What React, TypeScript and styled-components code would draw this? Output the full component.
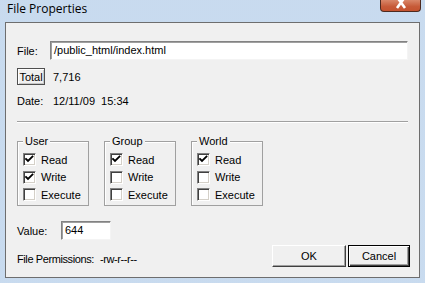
import React from 'react';
import styled, { createGlobalStyle } from 'styled-components';

const Global = createGlobalStyle`
  html, body { margin: 0; padding: 0; }
  body { width: 425px; height: 283px; overflow: hidden; background: #bfd4ea; }
`;

const Window = styled.div`
  width: 425px;
  height: 283px;
  box-sizing: border-box;
  background-color: #bcd3ea;
  background-image: radial-gradient(#d6e4f3 0.6px, transparent 0.8px);
  background-size: 2px 2px;
  display: flex;
  flex-direction: column;
  padding: 0 5px 5px 5px;
  font-family: "Liberation Sans", Arial, sans-serif;
  font-size: 11px;
  color: #000;
`;

const TitleBar = styled.div`
  height: 22px;
  display: flex;
  align-items: flex-start;
  justify-content: space-between;
`;

const Title = styled.div`
  font-family: "Open Sans", "Noto Sans", sans-serif;
  font-size: 12px;
  line-height: 16px;
  padding: 1px 0 0 2px;
  color: #000;
`;

const CloseButton = styled.div`
  width: 41px;
  height: 12px;
  box-sizing: border-box;
  background: linear-gradient(#d98769, #c65a38 60%, #c4532f);
  border: 1px solid #4d2a1f;
  border-top: none;
  border-radius: 0 0 4px 4px;
  display: flex;
  justify-content: center;
  align-items: flex-start;
  overflow: hidden;
  margin-right: -1px;
`;

const Panel = styled.div`
  flex: 1;
  background: #f0f0f0;
  border: 1px solid #6e6e6e;
  padding: 18px 11px 0 11px;
  display: flex;
  flex-direction: column;
`;

const Row = styled.div<{ $mt?: number; $h?: number }>`
  display: flex;
  align-items: center;
  margin-top: ${(p) => p.$mt ?? 0}px;
  height: ${(p) => (p.$h ? `${p.$h}px` : 'auto')};
`;

const Label = styled.span<{ $w?: number }>`
  width: ${(p) => (p.$w ? `${p.$w}px` : 'auto')};
  flex: none;
  white-space: nowrap;
`;

const TextBox = styled.div<{ $w: number }>`
  width: ${(p) => p.$w}px;
  height: 19px;
  box-sizing: border-box;
  background: #fff;
  border-style: solid;
  border-width: 1px;
  border-color: #828282 #f4f4f4 #f4f4f4 #828282;
  box-shadow: inset 1px 1px 0 #a0a0a0;
  padding: 0 0 0 3px;
  line-height: 17px;
  white-space: nowrap;
  overflow: hidden;
`;

const TotalBox = styled.div`
  width: 28px;
  height: 17px;
  box-sizing: border-box;
  border: 1px solid #4f4f4f;
  box-shadow: inset 1px 1px 0 #fff, inset -1px -1px 0 #c8c8c8;
  display: flex;
  align-items: center;
  justify-content: center;
  margin-right: 8px;
`;

const Separator = styled.div`
  height: 1px;
  background: #a0a0a0;
  border-bottom: 1px solid #fff;
  margin-top: 12px;
`;

const Groups = styled.div`
  display: flex;
  gap: 15px;
  margin-top: 18px;
`;

const GroupBox = styled.div`
  position: relative;
  width: 72px;
  height: 65px;
  box-sizing: border-box;
  border: 1px solid #a0a0a0;
  box-shadow: inset 1px 1px 0 #fff;
  padding: 9px 0 0 5px;
  display: flex;
  flex-direction: column;
`;

const Legend = styled.span`
  position: absolute;
  top: -7px;
  left: 5px;
  padding: 0 2px;
  background: #f0f0f0;
  line-height: 13px;
`;

const CheckRow = styled.label`
  display: flex;
  align-items: center;
  gap: 5px;
  height: 17.5px;
`;

const CheckBox = styled.span`
  width: 13px;
  height: 13px;
  box-sizing: border-box;
  background: #fff;
  border-style: solid;
  border-width: 1px;
  border-color: #808080 #fff #fff #808080;
  box-shadow: inset 1px 1px 0 #404040, inset -1px -1px 0 #d4d0c8;
  display: flex;
  flex: none;
`;

const Bottom = styled.div`
  display: flex;
  justify-content: space-between;
  margin-top: 15px;
`;

const LeftCol = styled.div`
  display: flex;
  flex-direction: column;
`;

const PermText = styled.div`
  margin-top: 11px;
  line-height: 16px;
  letter-spacing: -0.4px;
  white-space: nowrap;
`;

const PermValue = styled.span`
  margin-left: 6px;
`;

const Buttons = styled.div`
  display: flex;
  align-self: flex-end;
  gap: 2px;
  margin-right: -2px;
`;

const Button = styled.button<{ $default?: boolean; $w: number }>`
  width: ${(p) => p.$w}px;
  height: 22px;
  box-sizing: border-box;
  font: inherit;
  color: #000;
  background: #f0f0f0;
  border-style: solid;
  border-width: 1px;
  border-color: ${(p) => (p.$default ? '#000' : '#fff #404040 #404040 #fff')};
  box-shadow: ${(p) =>
    p.$default
      ? 'inset 1px 1px 0 #fff, inset -1px -1px 0 #404040, inset -2px -2px 0 #a0a0a0'
      : 'inset -1px -1px 0 #a0a0a0'};
  padding: 0;
  display: flex;
  align-items: center;
  justify-content: center;
`;

const Check = () => (
  <svg width="11" height="11" viewBox="0 0 11 11">
    <polyline points="2,5 4,7 8.5,2.5" fill="none" stroke="#000" strokeWidth="1.8" strokeLinecap="square" />
  </svg>
);

type Perm = { name: string; checks: boolean[] };

const perms: Perm[] = [
  { name: 'User', checks: [true, true, false] },
  { name: 'Group', checks: [true, false, false] },
  { name: 'World', checks: [true, false, false] },
];

const labels = ['Read', 'Write', 'Execute'];

export default function App() {
  return (
    <>
      <Global />
      <Window>
        <TitleBar>
          <Title>File Properties</Title>
          <CloseButton>
            <svg width="14" height="9" viewBox="0 0 14 9">
              <path d="M3 -3 L11 8 M11 -3 L3 8" stroke="#fff" strokeWidth="2.6" />
            </svg>
          </CloseButton>
        </TitleBar>
        <Panel>
          <Row>
            <Label $w={33}>File:</Label>
            <TextBox $w={359}>/public_html/index.html</TextBox>
          </Row>
          <Row $mt={8}>
            <TotalBox>Total</TotalBox>
            <span>7,716</span>
          </Row>
          <Row $mt={7} $h={17}>
            <Label $w={36}>Date:</Label>
            <span>12/11/09&nbsp; 15:34</span>
          </Row>
          <Separator />
          <Groups>
            {perms.map((g) => (
              <GroupBox key={g.name}>
                <Legend>{g.name}</Legend>
                {labels.map((l, i) => (
                  <CheckRow key={l}>
                    <CheckBox>{g.checks[i] && <Check />}</CheckBox>
                    {l}
                  </CheckRow>
                ))}
              </GroupBox>
            ))}
          </Groups>
          <Bottom>
            <LeftCol>
              <Row>
                <Label $w={44}>Value:</Label>
                <TextBox $w={50}>644</TextBox>
              </Row>
              <PermText>
                File Permissions:<PermValue>-rw-r--r--</PermValue>
              </PermText>
            </LeftCol>
            <Buttons>
              <Button $w={74}>OK</Button>
              <Button $w={62} $default>Cancel</Button>
            </Buttons>
          </Bottom>
        </Panel>
      </Window>
    </>
  );
}
